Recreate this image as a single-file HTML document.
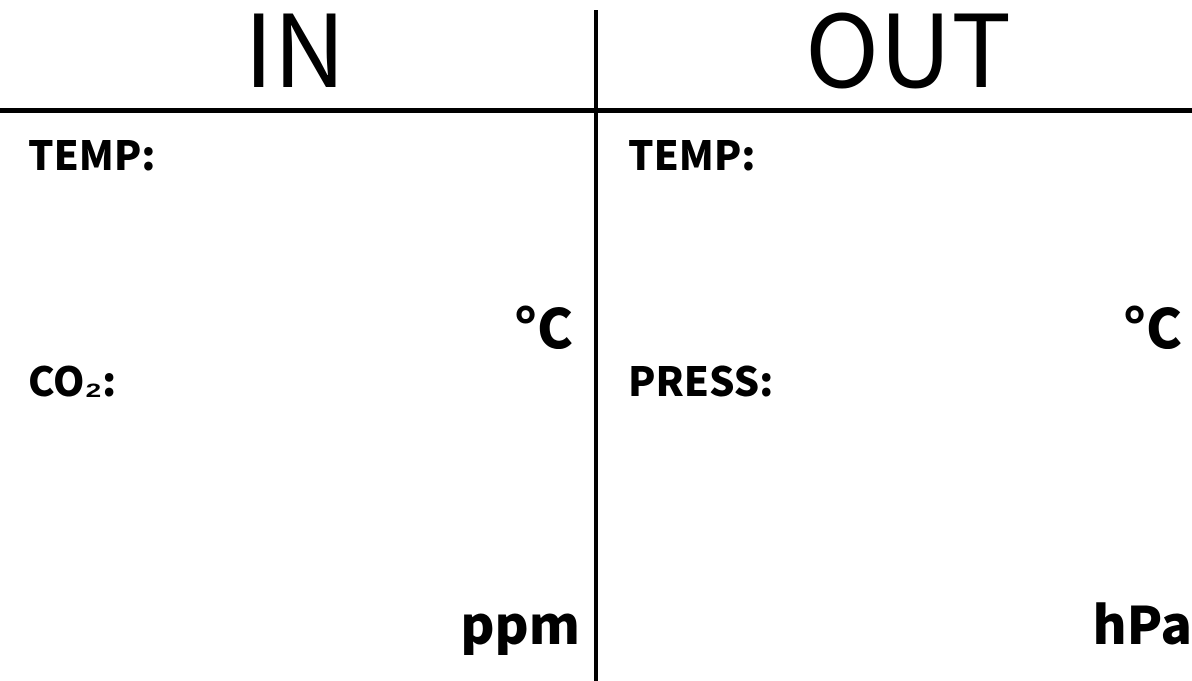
<!DOCTYPE html>
<html><head><style>
html,body{margin:0;padding:0;background:#fff;}
body{width:1192px;height:681px;position:relative;overflow:hidden;font-family:"Noto Sans CJK JP","Liberation Sans",sans-serif;color:#000;}
.t{position:absolute;line-height:1;white-space:nowrap;}
.b{font-weight:900;}
.hl{position:absolute;left:0;top:108px;width:1192px;height:5px;background:#000;}
.vl{position:absolute;left:594px;top:10px;width:4px;height:671px;background:#000;}
</style></head><body>
<div class="hl"></div><div class="vl"></div>
<div class="t" style="left:244px;top:-6px;font-size:100px;font-weight:400;">IN</div>
<div class="t" style="left:805px;top:-6px;font-size:100px;font-weight:400;">OUT</div>
<div class="t b" style="left:28px;top:133px;font-size:40px;">TEMP:</div>
<div class="t b" style="left:628px;top:133px;font-size:40px;">TEMP:</div>
<div class="t b" style="left:28px;top:359px;font-size:40px;">CO₂:</div>
<div class="t b" style="left:628px;top:359px;font-size:40px;">PRESS:</div>
<div class="t b" style="right:619px;top:298px;font-size:54px;">°C</div>
<div class="t b" style="right:10px;top:298px;font-size:54px;">°C</div>
<div class="t b" style="right:612px;top:596px;font-size:52px;">ppm</div>
<div class="t b" style="right:0px;top:596px;font-size:52px;">hPa</div>
</body></html>
